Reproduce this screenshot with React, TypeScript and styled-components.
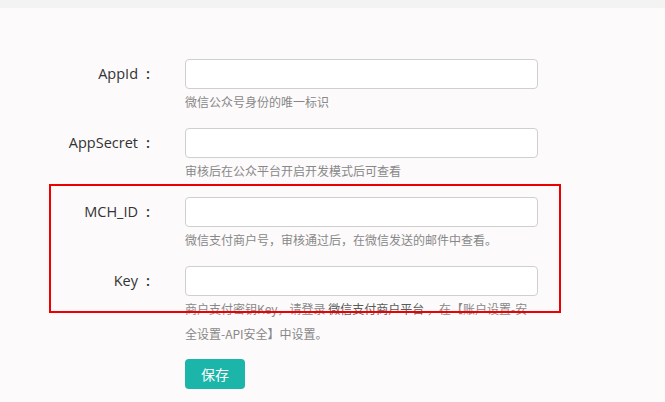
import React from "react";
import styled, { createGlobalStyle } from "styled-components";

const GlobalStyle = createGlobalStyle`
  html, body {
    margin: 0;
    padding: 0;
    background: #fcfafb;
    font-family: "Open Sans", "Noto Sans CJK SC", sans-serif;
  }
`;

const TopBar = styled.div`
  height: 8px;
  background: #f3f3f3;
`;

const Page = styled.div`
  position: relative;
  padding-top: 51px;
`;

const Form = styled.div`
  display: grid;
  grid-template-columns: 155px 353px;
  column-gap: 30px;
  align-items: start;
`;

const Label = styled.label`
  height: 30px;
  line-height: 30px;
  text-align: right;
  font-size: 14.5px;
  color: #333;
`;

const Colon = styled.span`
  display: inline-block;
  margin-left: 8px;
  padding-right: 5px;
  font-weight: 600;
`;

const Field = styled.div`
  display: flex;
  flex-direction: column;
  margin-bottom: 14px;
`;

const Input = styled.input`
  box-sizing: border-box;
  width: 353px;
  height: 30px;
  border: 1px solid #cfcfcf;
  border-radius: 4px;
  background: #fff;
  outline: none;
`;

const Help = styled.div`
  font-size: 12px;
  line-height: 25px;
  color: #888;
  font-family: "Noto Sans CJK SC", sans-serif;
`;

const Link = styled.a`
  color: #5a5a5a;
  text-decoration: none;
`;

const SaveButton = styled.button`
  width: 60px;
  height: 30px;
  margin-top: -1px;
  border: none;
  border-radius: 4px;
  background: #1bb5a9;
  color: #fff;
  font-size: 14px;
  font-family: "Noto Sans CJK SC", sans-serif;
`;

const Highlight = styled.div`
  position: absolute;
  left: 49px;
  top: 176px;
  width: 508px;
  height: 125px;
  border: 2px solid #ee0000;
  pointer-events: none;
`;

const FormLabel = ({ text }: { text: string }) => (
  <Label>
    {text}
    <Colon>:</Colon>
  </Label>
);

export default function App() {
  return (
    <>
      <GlobalStyle />
      <TopBar />
      <Page>
        <Form>
          <FormLabel text="AppId" />
          <Field>
            <Input />
            <Help>微信公众号身份的唯一标识</Help>
          </Field>
          <FormLabel text="AppSecret" />
          <Field>
            <Input />
            <Help>审核后在公众平台开启开发模式后可查看</Help>
          </Field>
          <FormLabel text="MCH_ID" />
          <Field>
            <Input />
            <Help>微信支付商户号，审核通过后，在微信发送的邮件中查看。</Help>
          </Field>
          <FormLabel text="Key" />
          <Field>
            <Input />
            <Help>
              商户支付密钥Key，请登录 <Link>微信支付商户平台</Link> ，在【账户设置-安全设置-API安全】中设置。
            </Help>
          </Field>
          <span />
          <div>
            <SaveButton>保存</SaveButton>
          </div>
        </Form>
        <Highlight />
      </Page>
    </>
  );
}
